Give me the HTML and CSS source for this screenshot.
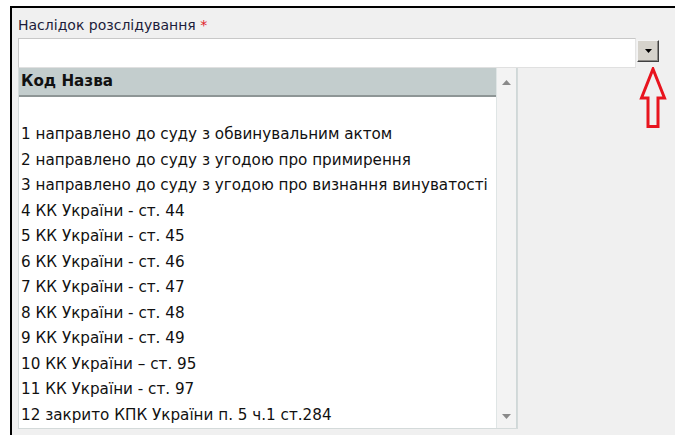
FILE: index.html
```html
<!DOCTYPE html>
<html lang="uk">
<head>
<meta charset="utf-8">
<title>Наслідок розслідування</title>
<link rel="stylesheet" href="styles.css">
</head>
<body>
<div class="frame">
  <div class="field-label">Наслідок розслідування <span class="req">*</span></div>
  <div class="combo">
    <div class="combo-input"></div>
    <div class="combo-btn">
      <svg width="9" height="5" viewBox="0 0 9 5"><path d="M1 0H8L4.5 4Z" fill="#000"/></svg>
    </div>
    <svg class="hint-arrow" width="28" height="62" viewBox="0 0 28 62">
      <path d="M14 2 L25.5 31 H19 V59.5 H9 V31 H2.5 Z" fill="none" stroke="#e8141e" stroke-width="3" stroke-linejoin="miter"/>
    </svg>
  </div>
  <div class="list">
    <div class="list-body">
      <div class="list-head">Код Назва</div>
      <div class="list-blank"></div>
      <div class="row">1 направлено до суду з обвинувальним актом</div>
      <div class="row">2 направлено до суду з угодою про примирення</div>
      <div class="row">3 направлено до суду з угодою про визнання винуватості</div>
      <div class="row">4 КК України - ст. 44</div>
      <div class="row">5 КК України - ст. 45</div>
      <div class="row">6 КК України - ст. 46</div>
      <div class="row">7 КК України - ст. 47</div>
      <div class="row">8 КК України - ст. 48</div>
      <div class="row">9 КК України - ст. 49</div>
      <div class="row">10 КК України – ст. 95</div>
      <div class="row">11 КК України - ст. 97</div>
      <div class="row">12 закрито КПК України п. 5 ч.1 ст.284</div>
    </div>
    <div class="scrollbar">
      <svg width="9" height="5" viewBox="0 0 9 5"><path d="M4.5 0L9 5H0Z" fill="#8a8a8a"/></svg>
      <svg width="9" height="5" viewBox="0 0 9 5"><path d="M0 0H9L4.5 5Z" fill="#8a8a8a"/></svg>
    </div>
  </div>
</div>
</body>
</html>
```

FILE: styles.css
```css
html, body {
  margin: 0;
  padding: 0;
  background: #ffffff;
  height: 100%;
  overflow: hidden;
}

.frame {
  margin: 6px 0 0 10px;
  height: calc(100% - 6px);
  box-sizing: border-box;
  border-top: 2px solid #000;
  border-left: 2px solid #000;
  background: #f0f0f0;
  padding: 8px 0 0 6px;
  font-family: "DejaVu Sans", Verdana, sans-serif;
  font-size: 15.2px;
  color: #111;
}

.field-label {
  height: 22px;
  line-height: 18px;
  font-size: 14px;
  color: #1c1c3a;
}

.req {
  color: #e0202a;
}

.combo {
  position: relative;
  display: flex;
  align-items: flex-start;
}

.combo-input {
  width: 616px;
  height: 28px;
  background: #fff;
  border: 1px solid #c8c8c8;
  border-right-color: #e4e4e4;
  border-bottom-color: #e0e0e0;
}

.combo-btn {
  margin: 2px 0 0 1px;
  width: 20px;
  height: 20px;
  background: #d6d3cc;
  border: 1px solid;
  border-color: #f4f4f4 #404040 #404040 #f4f4f4;
  box-shadow: inset -1px -1px 0 #8c8a86;
  display: flex;
  align-items: center;
  justify-content: center;
}

.hint-arrow {
  position: absolute;
  left: 621px;
  top: 29px;
}

.list {
  display: flex;
  width: 498px;
  height: 360px;
  background: #fff;
  border: 1px solid #d4dada;
  border-top: none;
}

.list-body {
  flex: 1;
  min-width: 0;
}

.list-head {
  height: 27px;
  line-height: 27px;
  background: #c3cdcd;
  border-bottom: 2px solid #8e9696;
  font-weight: bold;
  padding-left: 2px;
}

.list-blank {
  height: 25px;
}

.row {
  height: 25.5px;
  line-height: 25px;
  padding-left: 2px;
  white-space: nowrap;
}

.scrollbar {
  width: 21px;
  background: #f3f3f3;
  border-left: 1px solid #dfe5e5;
  border-right: 1px solid #cfd8d8;
  display: flex;
  flex-direction: column;
  align-items: center;
  justify-content: space-between;
  padding: 12px 0 9px;
  box-sizing: border-box;
}
```
